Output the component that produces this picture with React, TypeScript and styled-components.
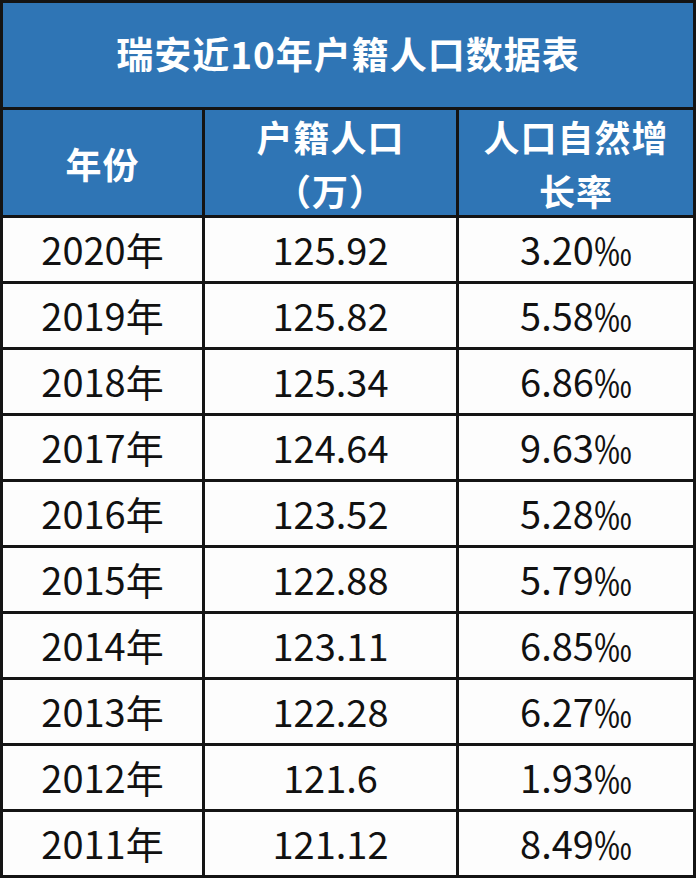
import { Fragment } from "react";
import styled, { createGlobalStyle } from "styled-components";

type Row = { year: string; population: string; rate: string };

const ROWS: Row[] = [
  { year: "2020年", population: "125.92", rate: "3.20‰" },
  { year: "2019年", population: "125.82", rate: "5.58‰" },
  { year: "2018年", population: "125.34", rate: "6.86‰" },
  { year: "2017年", population: "124.64", rate: "9.63‰" },
  { year: "2016年", population: "123.52", rate: "5.28‰" },
  { year: "2015年", population: "122.88", rate: "5.79‰" },
  { year: "2014年", population: "123.11", rate: "6.85‰" },
  { year: "2013年", population: "122.28", rate: "6.27‰" },
  { year: "2012年", population: "121.6", rate: "1.93‰" },
  { year: "2011年", population: "121.12", rate: "8.49‰" },
];

const GlobalStyle = createGlobalStyle`
  html, body {
    margin: 0;
    padding: 0;
    background: #ffffff;
  }
  body {
    font-family: "Noto Sans CJK SC", "Noto Sans", sans-serif;
  }
`;

const Table = styled.div`
  width: 696px;
  height: 878px;
  box-sizing: border-box;
  padding: 3px;
  background: #141414;
  display: grid;
  grid-template-columns: 199px 251px 234px;
  grid-template-rows: 104px 105px repeat(10, 63px);
  gap: 3px;
`;

const Title = styled.div`
  grid-column: 1 / -1;
  background: #2f75b5;
  color: #ffffff;
  font-size: 37px;
  font-weight: 700;
  display: flex;
  align-items: center;
  justify-content: center;
  letter-spacing: 1px;
  padding-bottom: 4px;
`;

const HeadCell = styled.div`
  background: #2f75b5;
  color: #ffffff;
  font-size: 36px;
  font-weight: 700;
  line-height: 54px;
  display: flex;
  flex-direction: column;
  align-items: center;
  justify-content: center;
  text-align: center;
  letter-spacing: 1px;
`;

const Cell = styled.div`
  background: #fdfdfd;
  color: #111111;
  font-size: 38px;
  font-weight: 400;
  display: flex;
  align-items: center;
  justify-content: center;
  padding-bottom: 2px;
`;

export default function App() {
  return (
    <>
      <GlobalStyle />
      <Table>
        <Title>瑞安近10年户籍人口数据表</Title>
        <HeadCell>年份</HeadCell>
        <HeadCell>
          <span>户籍人口</span>
          <span>（万）</span>
        </HeadCell>
        <HeadCell>
          <span>人口自然增</span>
          <span>长率</span>
        </HeadCell>
        {ROWS.map((row) => (
          <Fragment key={row.year}>
            <Cell>{row.year}</Cell>
            <Cell>{row.population}</Cell>
            <Cell>{row.rate}</Cell>
          </Fragment>
        ))}
      </Table>
    </>
  );
}
